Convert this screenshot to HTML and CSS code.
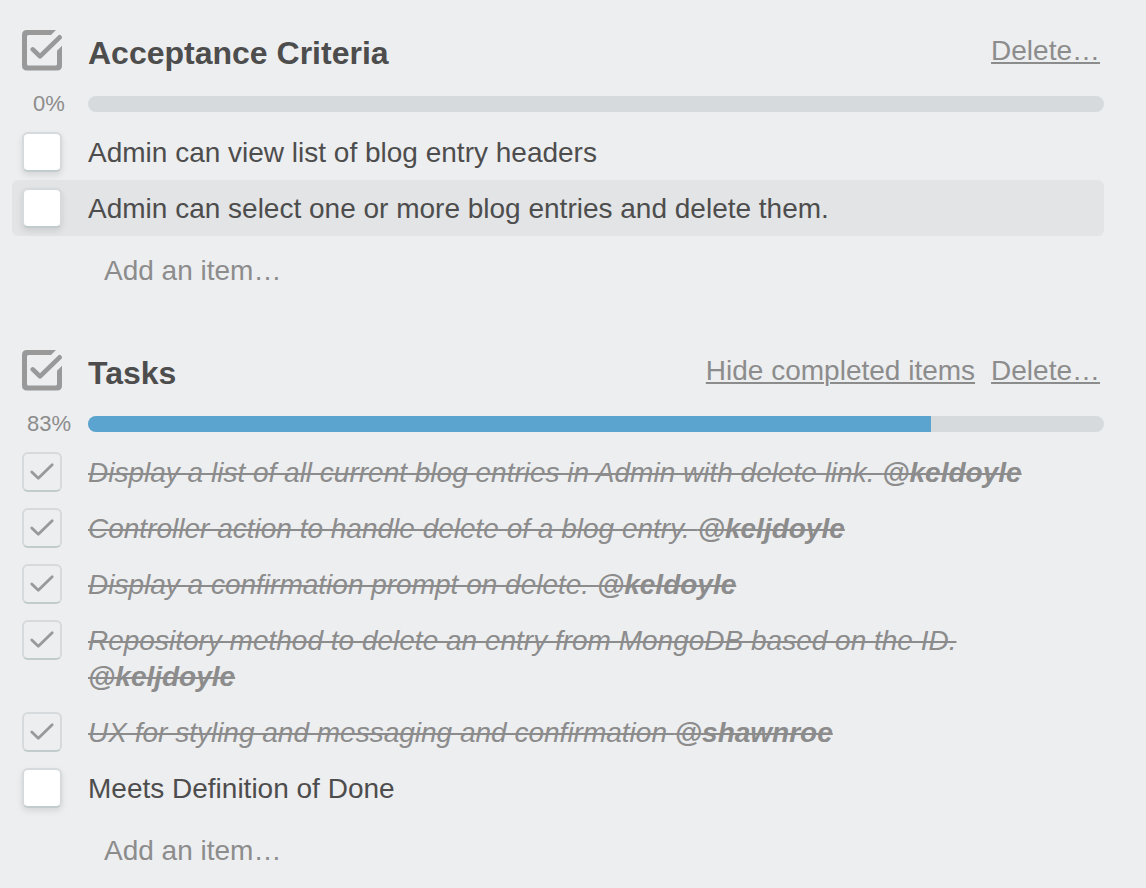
FILE: index.html
```html
<!DOCTYPE html>
<html lang="en">
<head>
<meta charset="utf-8">
<meta name="viewport" content="width=device-width, initial-scale=1">
<title>Checklists</title>
<link rel="stylesheet" href="styles.css">
</head>
<body>
<svg class="sprite" aria-hidden="true">
  <symbol id="icon-checklist" viewBox="0 0 40 41">
    <path fill="currentColor" d="M5 0H34L29 5H6.500Q5 5 5 6.500V34Q5 35.500 6.500 35.500H33.500Q35 35.500 35 34V20.800L40 15.800V35.500Q40 40.500 35 40.500H5Q0 40.500 0 35.500V5Q0 0 5 0Z"/>
    <path fill="none" stroke="currentColor" stroke-width="4.600" stroke-linecap="round" stroke-linejoin="round" d="M10.800 19.400L18 26.400L37.600 7.300"/>
  </symbol>
  <symbol id="icon-tick" viewBox="0 0 40 40">
    <path fill="none" stroke="currentColor" stroke-width="2.800" stroke-linecap="round" stroke-linejoin="round" d="M9.800 20L16.300 26.200L30.200 12.700"/>
  </symbol>
</svg>
<main class="card">
  <section class="checklist">
    <header class="checklist-header">
      <svg class="checklist-icon" aria-hidden="true"><use href="#icon-checklist"/></svg>
      <h2 class="checklist-title">Acceptance Criteria</h2>
      <nav class="checklist-actions"><a href="#">Delete…</a></nav>
    </header>
    <div class="progress">
      <span class="progress-label">0%</span>
      <div class="progress-track" role="progressbar" aria-label="Acceptance Criteria" aria-valuenow="0"><div class="progress-fill" style="width:0%"></div></div>
    </div>
    <ul class="items">
      <li><label class="item"><span class="check"><input class="check-input" type="checkbox"></span><span class="item-text">Admin can view list of blog entry headers</span></label></li>
      <li><label class="item item-active"><span class="check"><input class="check-input" type="checkbox"></span><span class="item-text">Admin can select one or more blog entries and delete them.</span></label></li>
    </ul>
    <button class="add-item" type="button">Add an item…</button>
  </section>

  <section class="checklist">
    <header class="checklist-header">
      <svg class="checklist-icon" aria-hidden="true"><use href="#icon-checklist"/></svg>
      <h2 class="checklist-title">Tasks</h2>
      <nav class="checklist-actions"><a href="#">Hide completed items</a><a href="#">Delete…</a></nav>
    </header>
    <div class="progress">
      <span class="progress-label">83%</span>
      <div class="progress-track" role="progressbar" aria-label="Tasks" aria-valuenow="83"><div class="progress-fill" style="width:83%"></div></div>
    </div>
    <ul class="items">
      <li><label class="item item-done"><span class="check"><input class="check-input" type="checkbox" checked><svg class="tick" aria-hidden="true"><use href="#icon-tick"/></svg></span><span class="item-text">Display a list of all current blog entries in Admin with delete link. <strong>@keldoyle</strong></span></label></li>
      <li><label class="item item-done"><span class="check"><input class="check-input" type="checkbox" checked><svg class="tick" aria-hidden="true"><use href="#icon-tick"/></svg></span><span class="item-text">Controller action to handle delete of a blog entry. <strong>@keljdoyle</strong></span></label></li>
      <li><label class="item item-done"><span class="check"><input class="check-input" type="checkbox" checked><svg class="tick" aria-hidden="true"><use href="#icon-tick"/></svg></span><span class="item-text">Display a confirmation prompt on delete. <strong>@keldoyle</strong></span></label></li>
      <li><label class="item item-done"><span class="check"><input class="check-input" type="checkbox" checked><svg class="tick" aria-hidden="true"><use href="#icon-tick"/></svg></span><span class="item-text">Repository method to delete an entry from MongoDB based on the ID. <strong>@keljdoyle</strong></span></label></li>
      <li><label class="item item-done"><span class="check"><input class="check-input" type="checkbox" checked><svg class="tick" aria-hidden="true"><use href="#icon-tick"/></svg></span><span class="item-text">UX for styling and messaging and confirmation <strong>@shawnroe</strong></span></label></li>
      <li><label class="item"><span class="check"><input class="check-input" type="checkbox"></span><span class="item-text">Meets Definition of Done</span></label></li>
    </ul>
    <button class="add-item" type="button">Add an item…</button>
  </section>
</main>
</body>
</html>
```
FILE: styles.css
```css
* {
  box-sizing: border-box;
}

body {
  margin: 0;
  background: #edeef0;
  color: #4d4d4d;
  font-family: "Helvetica Neue", "Liberation Sans", Arial, sans-serif;
  font-size: 28px;
  line-height: 36px;
}

.sprite {
  display: none;
}

.card {
  display: flex;
  flex-direction: column;
  gap: 56px;
  padding: 24px 42px 0 12px;
}

.checklist-header {
  display: flex;
  align-items: center;
  height: 52px;
  margin-bottom: 8px;
  padding-left: 10px;
}

.checklist-icon {
  flex: none;
  width: 40px;
  height: 41px;
  margin-right: 26px;
  color: #999;
}

.checklist-title {
  flex: 1;
  margin: 0;
  padding-top: 6px;
  font-size: 32px;
  line-height: 40px;
}

.checklist-actions {
  display: flex;
  gap: 16px;
  padding: 2px 4px 0 0;
}

.checklist-actions a {
  color: #8c8c8c;
  text-decoration-thickness: 2px;
  text-underline-offset: 2px;
}

.progress {
  display: flex;
  align-items: center;
  height: 40px;
}

.progress-label {
  flex: none;
  width: 76px;
  padding-right: 2px;
  color: #8c8c8c;
  font-size: 22px;
  text-align: center;
}

.progress-track {
  flex: 1;
  height: 16px;
  overflow: hidden;
  border-radius: 8px;
  background: #d6dadc;
}

.progress-fill {
  height: 100%;
  background: #5ba4cf;
}

.items {
  margin: 0;
  padding: 0;
  list-style: none;
}

.item {
  display: flex;
  align-items: flex-start;
  gap: 26px;
  padding: 8px 32px 8px 10px;
  border-radius: 6px;
}

.item-active {
  background: #e2e4e6;
}

.item-text {
  flex: 1;
  padding: 3px 0 1px;
}

.check {
  display: grid;
  flex: none;
  width: 40px;
  height: 40px;
}

.check-input,
.tick {
  grid-area: 1 / 1;
  width: 40px;
  height: 40px;
}

.check-input {
  margin: 0;
  appearance: none;
  border: 2px solid #d6dadc;
  border-bottom-color: #c2cccc;
  border-radius: 6px;
  background: #fff;
  box-shadow: 0 3px 6px rgba(0, 0, 0, 0.1);
}

.check-input:checked {
  background: transparent;
  box-shadow: none;
}

.tick {
  color: #999;
  pointer-events: none;
}

.item-done {
  color: #8c8c8c;
}

.item-done .item-text {
  font-style: italic;
  text-decoration: line-through 2px;
}

.add-item {
  display: block;
  height: 36px;
  margin: 16px 0 0 92px;
  padding: 1px 0 0;
  border: 0;
  background: none;
  color: #8c8c8c;
  font: inherit;
}
```
